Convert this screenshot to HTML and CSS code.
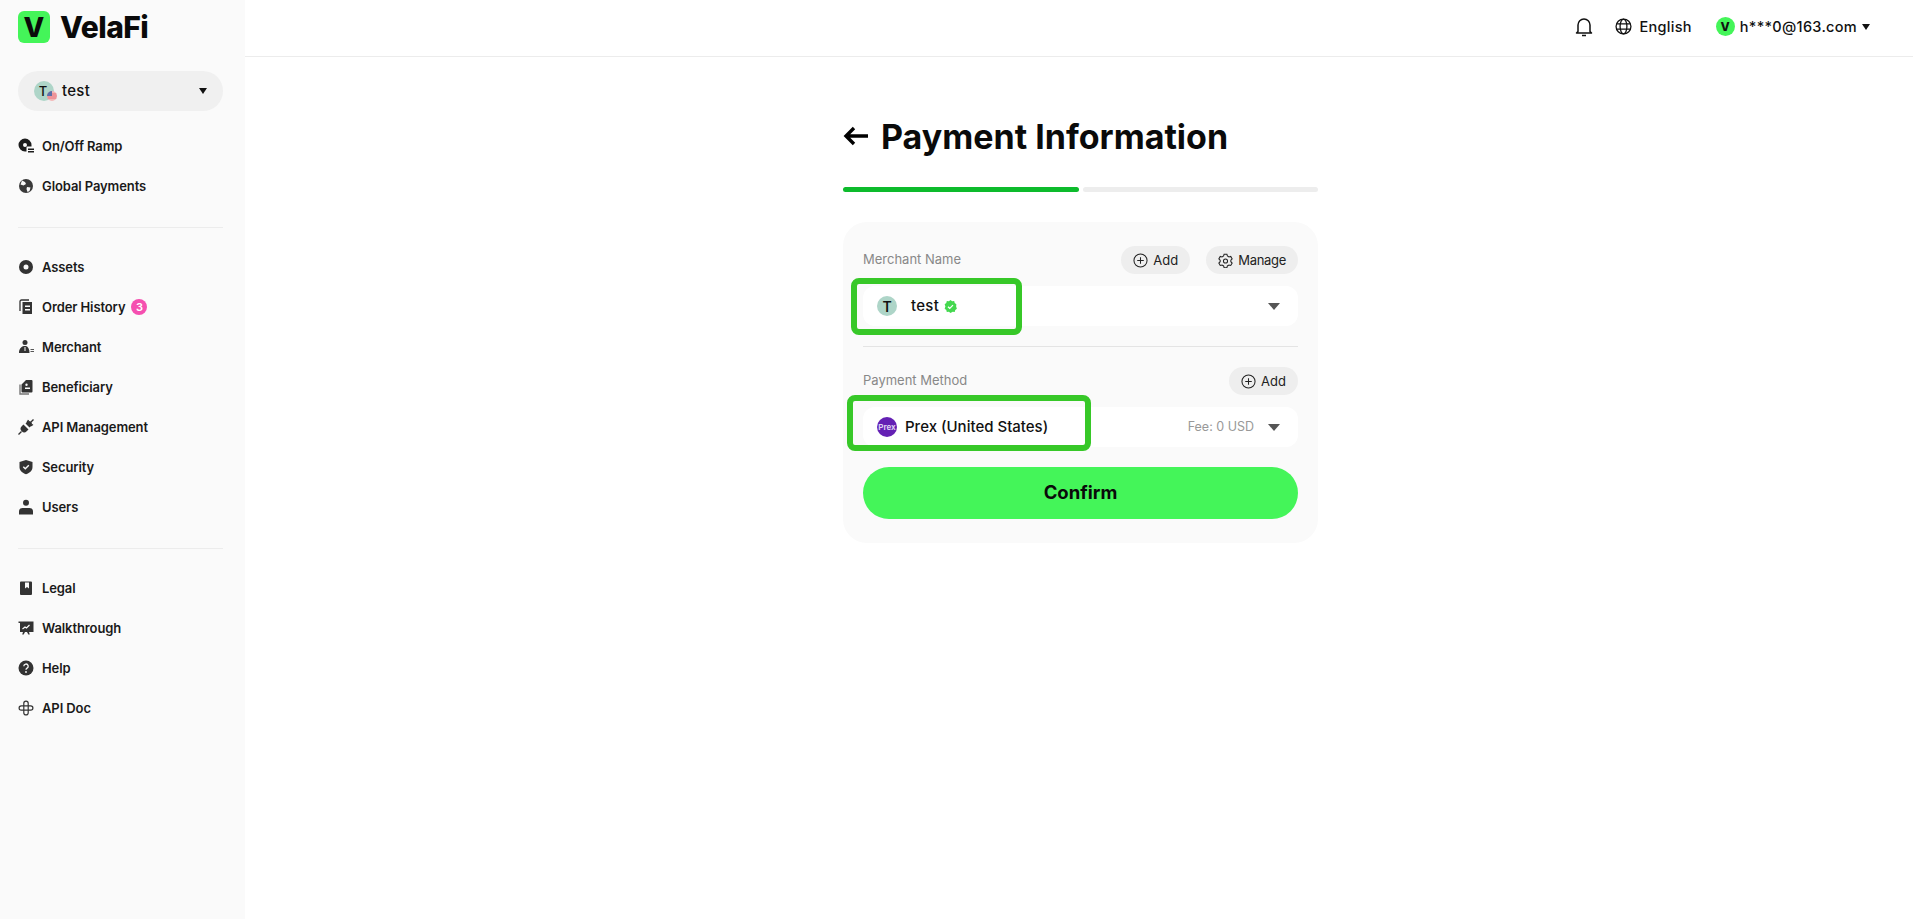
FILE: index.html
```html
<!DOCTYPE html>
<html lang="en">
<head>
    <meta charset="UTF-8">
    <meta name="viewport" content="width=device-width, initial-scale=1.0">
    <title>Payment Information</title>
    <link rel="stylesheet" href="styles.css">
</head>
<body>
    <div class="app">
        <aside class="sidebar">
            <div class="logo">
                <span class="logo-mark">V</span>
                <span class="logo-text">VelaFi</span>
            </div>

            <div class="account">
                <span class="avatar account-avatar">T
                    <svg class="flag" viewBox="0 0 10 10">
                        <circle cx="5" cy="5" r="5" fill="#f3b6b6"/>
                        <path d="M0.6 3h8.8M0.2 5h9.6M0.6 7h8.8" stroke="#e8737c" stroke-width="1"/>
                        <path d="M5 0a5 5 0 0 0-5 5h5z" fill="#5a6fa8"/>
                    </svg>
                </span>
                <span class="account-name">test</span>
                <span class="caret-small"></span>
            </div>

            <nav class="nav">
                <a class="nav-item">
                    <svg class="nav-icon" viewBox="0 0 16 16"><path fill-rule="evenodd" d="M7 0.500a6.500 6.500 0 0 1 6.500 6.500v1.500H9.500a1 1 0 0 0-1 1V13.500H7A6.500 6.500 0 0 1 7 0.500zm0 4.500a2 2 0 1 0 0 4 2 2 0 0 0 0-4z" fill="#1c1c1c"/><path d="M10 11.200h6M10 13.800h6" stroke="#1c1c1c" stroke-width="1.500"/></svg>
                    On/Off Ramp
                </a>
                <a class="nav-item">
                    <svg class="nav-icon" viewBox="0 0 16 16"><circle cx="8" cy="8" r="7" fill="#3a3a3a"/><path d="M4 2.500l3 1.500 1 2-2.500 1.500-3-1zM9 9l3.500 0.500-1 3.500-2 1-1-3z" fill="#fafafa"/></svg>
                    Global Payments
                </a>
            </nav>
            <div class="nav-line"></div>

            <nav class="nav">
                <a class="nav-item">
                    <svg class="nav-icon" viewBox="0 0 16 16"><path fill-rule="evenodd" d="M8 1a7 7 0 1 1 0 14A7 7 0 0 1 8 1zm0 4.500a2.500 2.500 0 1 0 0 5 2.500 2.500 0 0 0 0-5z" fill="#333"/></svg>
                    Assets
                </a>
                <a class="nav-item">
                    <svg class="nav-icon" viewBox="0 0 16 16"><path d="M2 12V2.500A1.500 1.500 0 0 1 3.500 1H11" fill="none" stroke="#333" stroke-width="1.300"/><path fill-rule="evenodd" d="M4.500 3H14v11.500a.5.500 0 0 1-.5.500h-9zM7 6.500V8h5V6.500zM7 10v1.500h5V10z" fill="#333"/></svg>
                    <span>Order History</span>
                    <span class="badge">3</span>
                </a>
                <a class="nav-item">
                    <svg class="nav-icon" viewBox="0 0 16 16"><circle cx="7" cy="3.500" r="2.500" fill="#333"/><path fill-rule="evenodd" d="M1 14c0-4 2-6.500 5-7h2c2 .5 3.500 3 3.500 7zM6.500 8v4h1V8z" fill="#333"/><path d="M12.500 10.500H16M12.500 12.500H16" stroke="#555" stroke-width="1"/></svg>
                    Merchant
                </a>
                <a class="nav-item">
                    <svg class="nav-icon" viewBox="0 0 16 16"><path d="M2 5.500V15h9" fill="none" stroke="#777" stroke-width="1.400"/><path fill-rule="evenodd" d="M3.500 5.500L8 1h5.500a1 1 0 0 1 1 1v10.500a1 1 0 0 1-1 1h-9a1 1 0 0 1-1-1zM7 8.500V10h5V8.500zM8.500 4.500a1.200 1.200 0 1 0 0 2.400 1.200 1.200 0 0 0 0-2.400z" fill="#333"/></svg>
                    Beneficiary
                </a>
                <a class="nav-item">
                    <svg class="nav-icon" viewBox="0 0 16 16"><path d="M5.500 5.500l5 5-1.800 1.800a3.300 3.300 0 0 1-5-5zM7.500 4.500l4 4 1.500-1.500a2.800 2.800 0 0 0-4-4z" fill="#333"/><path d="M3.500 12.500L0.500 15.500M12 4L15.500 0.500M9 3.500l1.500-2.500M12.500 7l2.500-1.500" stroke="#333" stroke-width="1.400"/></svg>
                    API Management
                </a>
                <a class="nav-item">
                    <svg class="nav-icon" viewBox="0 0 16 16"><path d="M8 1l6.500 2v5c0 3.500-2.700 6-6.500 7.200C4.200 14 1.500 11.500 1.500 8V3z" fill="#333"/><path d="M5.300 7.800l2 2 3.500-3.500" fill="none" stroke="#fafafa" stroke-width="1.400"/></svg>
                    Security
                </a>
                <a class="nav-item">
                    <svg class="nav-icon" viewBox="0 0 16 16"><circle cx="8" cy="3.800" r="3" fill="#333"/><path d="M1 15.500v-3a3.500 3.500 0 0 1 3.500-3.500h7a3.500 3.500 0 0 1 3.500 3.500v3z" fill="#333"/></svg>
                    Users
                </a>
            </nav>
            <div class="nav-line"></div>

            <nav class="nav">
                <a class="nav-item">
                    <svg class="nav-icon" viewBox="0 0 16 16"><path fill-rule="evenodd" d="M3 1.500h10a1 1 0 0 1 1 1V14a1 1 0 0 1-1 1H3a1 1 0 0 1-1-1V2.500a1 1 0 0 1 1-1zM7 2.500v6l2-1.500 2 1.500v-6z" fill="#333"/></svg>
                    Legal
                </a>
                <a class="nav-item">
                    <svg class="nav-icon" viewBox="0 0 16 16"><path d="M0.500 1.500h15V12H11l.8 2.500h-1.500L9 12H7l-1.300 2.500H4.200L5 12H2V3H0.500z" fill="#333"/><path d="M4.500 9l2.500-2 1.500 1 3-3" fill="none" stroke="#fafafa" stroke-width="1.200"/></svg>
                    Walkthrough
                </a>
                <a class="nav-item">
                    <svg class="nav-icon" viewBox="0 0 16 16"><circle cx="8" cy="8" r="7.500" fill="#333"/><path d="M5.800 6.200a2.200 2.200 0 1 1 3.300 1.900c-.8.500-1.100.9-1.100 1.700" fill="none" stroke="#fafafa" stroke-width="1.300"/><circle cx="8" cy="12" r=".9" fill="#fafafa"/></svg>
                    Help
                </a>
                <a class="nav-item">
                    <svg class="nav-icon" viewBox="0 0 16 16"><path d="M5.800 5.800V3.300a2.200 2.200 0 0 1 4.400 0v2.500h2.500a2.200 2.200 0 0 1 0 4.400h-2.500v2.500a2.200 2.200 0 0 1-4.400 0v-2.500H3.300a2.200 2.200 0 0 1 0-4.400zM5.800 5.800h4.400v4.400H5.800z" fill="none" stroke="#333" stroke-width="1.200"/></svg>
                    API Doc
                </a>
            </nav>
        </aside>

        <div class="main">
            <header class="topbar">
                <svg class="bell" viewBox="0 0 18 20"><path d="M3 14.500V8a6 6 0 0 1 12 0v6.500l1.500 1.500h-15zM7 18.600h4" fill="none" stroke="#111" stroke-width="1.500" stroke-linejoin="round"/></svg>
                <div class="lang">
                    <svg class="globe" viewBox="0 0 16 16"><g fill="none" stroke="#111" stroke-width="1.200"><circle cx="8" cy="8" r="7"/><ellipse cx="8" cy="8" rx="3.200" ry="7"/><path d="M1.500 5.500h13M1.500 10.500h13"/></g></svg>
                    <span>English</span>
                </div>
                <div class="user">
                    <span class="user-avatar">V</span>
                    <span>h***0@163.com</span>
                    <span class="caret-small"></span>
                </div>
            </header>

            <section class="content">
                <div class="wrap">
                    <div class="title-row">
                        <svg class="back" viewBox="0 0 26 20"><path d="M25 10H3M11 2l-8 8 8 8" fill="none" stroke="#000" stroke-width="3.400"/></svg>
                        <h1>Payment Information</h1>
                    </div>

                    <div class="steps">
                        <div class="step step-done"></div>
                        <div class="step"></div>
                    </div>

                    <div class="panel">
                        <div class="field-head">
                            <span class="field-label">Merchant Name</span>
                            <div class="field-actions">
                                <button class="pill">
                                    <svg class="pill-icon" viewBox="0 0 16 16"><g fill="none" stroke="#222" stroke-width="1.100"><circle cx="8" cy="8" r="7"/><path d="M8 4.500v7M4.500 8h7"/></g></svg>
                                    Add
                                </button>
                                <button class="pill pill-manage">
                                    <svg class="pill-icon" viewBox="0 0 16 16"><g fill="none" stroke="#222" stroke-width="1.100"><path d="M6.500 1.300h3l.5 1.900 1.700 1 1.900-.5 1.500 2.600-1.400 1.400v1.600l1.400 1.400-1.500 2.600-1.900-.5-1.700 1-.5 1.900h-3l-.5-1.900-1.700-1-1.900.5L.9 10.700l1.400-1.400V7.700L.9 6.300l1.500-2.600 1.900.5 1.700-1z"/><circle cx="8" cy="8.500" r="2.200"/></g></svg>
                                    Manage
                                </button>
                            </div>
                        </div>
                        <div class="select">
                            <span class="avatar select-avatar">T</span>
                            <span class="merchant-name">test</span>
                            <svg class="verified" viewBox="0 0 12 12"><path d="M6 0l1.500 1.100 1.900-.1.500 1.800 1.500 1.200L11.200 6l.7 2-1.500 1.200-.5 1.800-1.900-.1L6 12l-1.500-1.100-1.900.1-.5-1.800L.6 8l.7-2L.6 4l1.500-1.200.5-1.800 1.900.1z" fill="#44d84f"/><path d="M3.700 6.200l1.600 1.500 3-3" fill="none" stroke="#fff" stroke-width="1.200"/></svg>
                            <span class="caret"></span>
                            <div class="mark mark-merchant"></div>
                        </div>

                        <div class="panel-line"></div>

                        <div class="field-head">
                            <span class="field-label">Payment Method</span>
                            <div class="field-actions">
                                <button class="pill">
                                    <svg class="pill-icon" viewBox="0 0 16 16"><g fill="none" stroke="#222" stroke-width="1.100"><circle cx="8" cy="8" r="7"/><path d="M8 4.500v7M4.500 8h7"/></g></svg>
                                    Add
                                </button>
                            </div>
                        </div>
                        <div class="select">
                            <span class="prex">Prex</span>
                            <span class="method-name">Prex (United States)</span>
                            <span class="fee">Fee: 0 USD</span>
                            <span class="caret caret-fee"></span>
                            <div class="mark mark-method"></div>
                        </div>

                        <button class="confirm">Confirm</button>
                    </div>
                </div>
            </section>
        </div>
    </div>
</body>
</html>
```

FILE: styles.css
```css
* {
    box-sizing: border-box;
}

body {
    margin: 0;
    font-family: Inter, "Liberation Sans", sans-serif;
    color: #111;
    background-color: white;
}

.app {
    display: flex;
    min-height: 100vh;
}

/* sidebar */
.sidebar {
    width: 245px;
    flex-shrink: 0;
    padding: 11px 22px 0 18px;
    background-color: #fafafa;
}

.logo {
    display: flex;
    align-items: center;
    gap: 10px;
    height: 32px;
}

.logo-mark {
    display: flex;
    align-items: center;
    justify-content: center;
    width: 32px;
    height: 32px;
    border-radius: 6px;
    background-color: #44f559;
    font-size: 27px;
    font-weight: 800;
    color: #0a0a0a;
}

.logo-text {
    font-size: 30px;
    font-weight: 800;
    letter-spacing: -0.5px;
    color: #0a0a0a;
}

.account {
    display: flex;
    align-items: center;
    height: 40px;
    margin-top: 28px;
    padding: 0 16px;
    border-radius: 20px;
    background-color: #f0f0f0;
}

.avatar {
    position: relative;
    display: flex;
    align-items: center;
    justify-content: center;
    border-radius: 50%;
    background-color: #aed5c8;
    color: #111;
    font-weight: 500;
}

.account-avatar {
    width: 20px;
    height: 20px;
    font-size: 13px;
    padding-right: 2px;
}

.flag {
    position: absolute;
    right: -3px;
    bottom: 0;
    width: 10px;
    height: 10px;
}

.account-name {
    flex: 1;
    margin-left: 8px;
    padding-bottom: 2px;
    font-size: 15px;
    font-weight: 500;
    letter-spacing: 0.3px;
}

.caret-small {
    width: 0;
    height: 0;
    border-left: 4px solid transparent;
    border-right: 4px solid transparent;
    border-top: 6px solid #111;
}

.nav {
    display: flex;
    flex-direction: column;
}

.nav-item {
    display: flex;
    align-items: center;
    height: 40px;
    font-size: 13px;
    font-weight: 600;
    letter-spacing: -0.1px;
    color: #1a1a1a;
}

.nav-icon {
    width: 16px;
    height: 16px;
    margin-right: 8px;
    flex-shrink: 0;
}

.sidebar > .nav:first-of-type {
    margin-top: 15px;
}

.nav-line {
    height: 1px;
    margin: 21px 0 19px;
    background-color: #ececec;
}

.badge {
    display: flex;
    align-items: center;
    justify-content: center;
    width: 16px;
    height: 16px;
    margin-left: 6px;
    border-radius: 50%;
    background-color: #f54fb0;
    color: white;
    font-size: 11px;
    font-weight: 600;
}

/* main */
.main {
    flex: 1;
    min-width: 0;
}

.topbar {
    display: flex;
    align-items: center;
    justify-content: flex-end;
    height: 57px;
    padding-right: 43px;
    padding-bottom: 3px;
    border-bottom: 1px solid #ececec;
    font-size: 14.5px;
    font-weight: 500;
    letter-spacing: 0.3px;
}

.bell {
    width: 18px;
    height: 20px;
}

.lang {
    display: flex;
    align-items: center;
    gap: 7px;
    margin-left: 22px;
}

.globe {
    width: 17px;
    height: 17px;
}

.user {
    display: flex;
    align-items: center;
    gap: 5px;
    margin-left: 24px;
}

.user-avatar {
    display: flex;
    align-items: center;
    justify-content: center;
    width: 19px;
    height: 19px;
    border-radius: 50%;
    background-color: #44f559;
    font-size: 12px;
    font-weight: 800;
}

.content {
    display: flex;
    justify-content: center;
    padding-left: 3px;
}

.wrap {
    width: 475px;
}

.title-row {
    display: flex;
    align-items: center;
    gap: 12px;
    height: 42px;
    margin-top: 58px;
}

.back {
    width: 26px;
    height: 20px;
}

h1 {
    margin: 0;
    font-size: 34px;
    font-weight: 700;
    color: #0a0a0a;
}

.steps {
    display: flex;
    gap: 4px;
    margin-top: 30px;
}

.step {
    flex: 1;
    height: 5px;
    border-radius: 3px;
    background-color: #ededed;
}

.step-done {
    background-color: #0dbb2c;
}

.panel {
    margin-top: 30px;
    padding: 24px 20px;
    border-radius: 24px;
    background-color: #fafafa;
}

.field-head {
    display: flex;
    align-items: center;
    justify-content: space-between;
    height: 28px;
}

.field-label {
    padding-bottom: 3px;
    font-size: 13px;
    color: #888;
}

.field-actions {
    display: flex;
    gap: 16px;
}

.pill {
    display: flex;
    align-items: center;
    gap: 5px;
    height: 28px;
    padding: 0 12px;
    border: none;
    border-radius: 14px;
    background-color: #eee;
    font-family: inherit;
    font-size: 13px;
    color: #222;
}

.pill-manage {
    letter-spacing: -0.3px;
}

.pill-icon {
    width: 15px;
    height: 15px;
}

.select {
    position: relative;
    display: flex;
    align-items: center;
    height: 40px;
    margin-top: 12px;
    padding: 0 18px 0 14px;
    border-radius: 12px;
    background-color: white;
}

.select-avatar {
    width: 20px;
    height: 20px;
    font-size: 14px;
    font-weight: 600;
}

.merchant-name {
    margin-left: 14px;
    padding-bottom: 2px;
    font-size: 15px;
    font-weight: 500;
    letter-spacing: 0.3px;
}

.verified {
    width: 13px;
    height: 13px;
    margin-left: 5px;
}

.caret {
    width: 0;
    height: 0;
    margin-left: auto;
    border-left: 6px solid transparent;
    border-right: 6px solid transparent;
    border-top: 7px solid #555;
}

.caret-fee {
    margin-left: 14px;
}

.prex {
    display: flex;
    align-items: center;
    justify-content: center;
    width: 20px;
    height: 20px;
    border-radius: 50%;
    background-color: #6420b4;
    color: #ddd0f0;
    font-size: 8px;
    font-weight: 700;
}

.method-name {
    margin-left: 8px;
    padding-bottom: 2px;
    font-size: 15px;
    font-weight: 500;
}

.fee {
    margin-left: auto;
    padding-bottom: 2px;
    font-size: 12.5px;
    color: #999;
}

/* green marks drawn on top of the screenshot */
.mark {
    position: absolute;
    border: 6px solid #37c828;
    border-radius: 8px;
}

.mark-merchant {
    left: -12px;
    top: -8px;
    width: 171px;
    height: 57px;
}

.mark-method {
    left: -16px;
    top: -12px;
    width: 244px;
    height: 56px;
}

.panel-line {
    height: 1px;
    margin: 20px 0;
    background-color: #e4e4e4;
}

.confirm {
    display: block;
    width: 100%;
    height: 52px;
    margin-top: 20px;
    padding-bottom: 3px;
    border: none;
    border-radius: 26px;
    background-color: #44f559;
    font-family: inherit;
    font-size: 18.5px;
    font-weight: 700;
    color: #0a0a0a;
}
```
